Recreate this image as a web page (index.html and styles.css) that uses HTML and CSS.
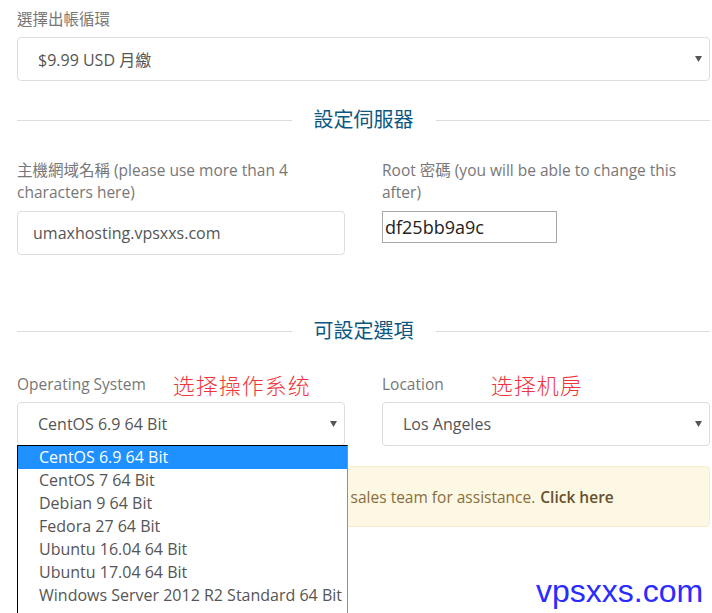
FILE: index.html
```html
<!DOCTYPE html>
<html lang="zh-Hant">
<head>
<meta charset="utf-8">
<title>Configure</title>
<link rel="stylesheet" href="styles.css">
</head>
<body>
<div class="page">
  <div class="field">
    <div class="label label-top">選擇出帳循環</div>
    <div class="select">
      <span>$9.99 USD 月繳</span>
      <svg class="caret" width="7" height="6" viewBox="0 0 7 6"><path d="M0 0H7L3.5 6Z" fill="#555"/></svg>
    </div>
  </div>

  <div class="divider"><span>設定伺服器</span></div>

  <div class="cols">
    <div class="field">
      <div class="label">主機網域名稱 (please use more than 4 characters here)</div>
      <div class="input">umaxhosting.vpsxxs.com</div>
    </div>
    <div class="field">
      <div class="label">Root 密碼 (you will be able to change this after)</div>
      <div class="plain-input">df25bb9a9c</div>
    </div>
  </div>

  <div class="divider divider-2"><span>可設定選項</span></div>

  <div class="cols">
    <div class="field">
      <div class="label label-top">Operating System<span class="note note-os">选择操作系统</span></div>
      <div class="select-wrap">
        <div class="select">
          <span>CentOS 6.9 64 Bit</span>
          <svg class="caret" width="7" height="6" viewBox="0 0 7 6"><path d="M0 0H7L3.5 6Z" fill="#555"/></svg>
        </div>
        <ul class="dropdown">
          <li class="active">CentOS 6.9 64 Bit</li>
          <li>CentOS 7 64 Bit</li>
          <li>Debian 9 64 Bit</li>
          <li>Fedora 27 64 Bit</li>
          <li>Ubuntu 16.04 64 Bit</li>
          <li>Ubuntu 17.04 64 Bit</li>
          <li>Windows Server 2012 R2 Standard 64 Bit</li>
        </ul>
      </div>
    </div>
    <div class="field">
      <div class="label label-top">Location<span class="note note-loc">选择机房</span></div>
      <div class="select">
        <span>Los Angeles</span>
        <svg class="caret" width="7" height="6" viewBox="0 0 7 6"><path d="M0 0H7L3.5 6Z" fill="#555"/></svg>
      </div>
    </div>
  </div>

  <div class="alert">Have any questions about this? Contact our sales team for assistance. <b>Click here</b></div>

  <div class="watermark">vpsxxs.com</div>
</div>
</body>
</html>
```

FILE: styles.css
```css
html, body {
  margin: 0;
  padding: 0;
  background: #fff;
  overflow: hidden;
}
body {
  font-family: "Open Sans", "Noto Sans CJK TC", sans-serif;
  font-size: 16px;
  color: #555;
}
.page {
  position: relative;
  width: 693px;
  padding: 8px 0 0 17px;
  height: 605px;
  overflow: hidden;
}
.label {
  color: #777;
  font-size: 15.5px;
  line-height: 22px;
  margin-bottom: 8px;
}
.label-top {
  margin-bottom: 7px;
  height: 22px;
}
.select, .input {
  box-sizing: border-box;
  height: 44px;
  border: 1px solid #ddd;
  border-radius: 4px;
  background: #fff;
  display: flex;
  align-items: center;
  color: #555;
  font-size: 16px;
}
.select {
  padding: 0 7px 0 20px;
}
.input {
  padding: 0 15px;
}
.select span { flex: 1; }
.caret { display: block; }
.divider {
  display: flex;
  align-items: center;
  gap: 22px;
  margin: 25px 0;
  height: 28px;
}
.divider::before, .divider::after {
  content: "";
  flex: 1;
  height: 1px;
  background: #ddd;
}
.divider span {
  color: #0b5780;
  font-size: 20px;
  line-height: 28px;
}
.divider-2 {
  margin: 62px 0 28px;
}
.cols {
  display: grid;
  grid-template-columns: 328px 328px;
  column-gap: 37px;
}
.plain-input {
  box-sizing: border-box;
  width: 175px;
  height: 32px;
  border: 1px solid #a9a9a9;
  padding: 0 2px;
  font-size: 18px;
  line-height: 30px;
  color: #222;
}
.note {
  display: inline-block;
  vertical-align: top;
  height: 22px;
  color: #f0353a;
  font-size: 22px;
  letter-spacing: 1px;
  line-height: 22px;
  font-family: "Noto Sans CJK SC", sans-serif;
  font-weight: 300;
}
.note-os { margin-left: 27px; }
.note-loc { margin-left: 47px; }
.select-wrap {
  position: relative;
}
.dropdown {
  position: absolute;
  z-index: 5;
  top: 43px;
  left: 0;
  width: 331px;
  box-sizing: border-box;
  margin: 0;
  padding: 0;
  list-style: none;
  background: #fff;
  border: 1px solid #6f95d8;
  border-top-color: #000;
  border-left-color: #000;
  height: 200px;
}
.dropdown li {
  height: 23px;
  line-height: 23px;
  padding-left: 21px;
  color: #555;
  font-size: 16px;
  white-space: nowrap;
}
.dropdown li.active {
  background: #1e90ff;
  color: #fff;
}
.alert {
  margin-top: 20px;
  box-sizing: border-box;
  height: 61px;
  display: flex;
  align-items: center;
  padding: 0 15px;
  background: #fcf8e3;
  border: 1px solid #faebcc;
  border-radius: 4px;
  color: #8a6d3b;
  font-size: 15.5px;
  white-space: nowrap;
}
.alert b {
  margin-left: 5px;
  color: #66512c;
  font-weight: 600;
}
.watermark {
  position: absolute;
  z-index: 10;
  left: 536px;
  top: 571px;
  font-family: "Liberation Sans", Arial, sans-serif;
  font-size: 32px;
  line-height: 40px;
  color: #2b2bff;
}
```
